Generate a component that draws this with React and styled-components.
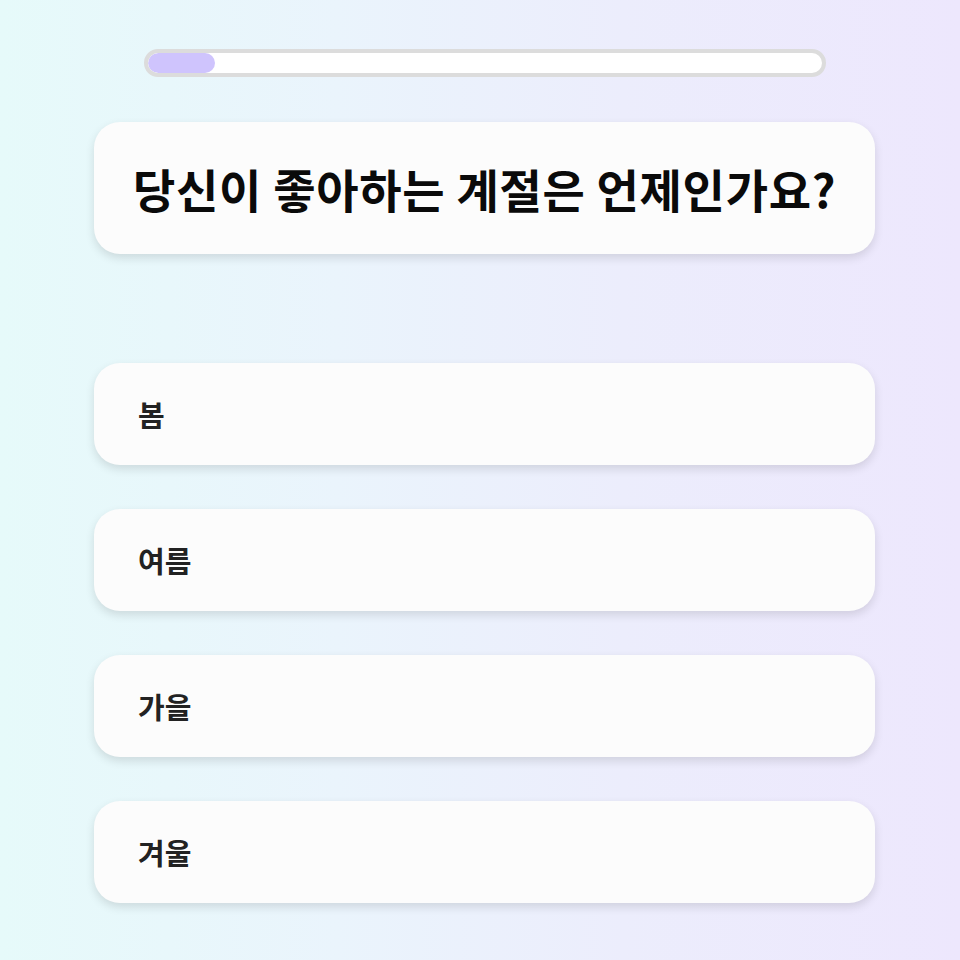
import React from 'react';
import styled, { createGlobalStyle } from 'styled-components';

const GlobalStyle = createGlobalStyle`
  html, body {
    margin: 0;
    padding: 0;
  }
  body {
    font-family: "Noto Sans CJK KR", "Noto Sans", sans-serif;
    background: linear-gradient(90deg, #e6fafa 0%, #eaf4fc 35%, #ecedfc 65%, #ede7fd 100%);
    min-height: 960px;
  }
`;

const Page = styled.div`
  min-height: 960px;
  box-sizing: border-box;
  padding: 49px 85px 0 94px;
`;

const Quiz = styled.div`
  display: flex;
  flex-direction: column;
  align-items: center;
`;

const ProgressTrack = styled.div`
  width: 682px;
  height: 28px;
  box-sizing: border-box;
  border: 4px solid #dcdcdc;
  border-radius: 14px;
  background: #ffffff;
  overflow: hidden;
`;

const ProgressFill = styled.div`
  height: 100%;
  background: #cfc4fd;
  border-radius: 10px;
`;

const QuestionCard = styled.div`
  width: 100%;
  height: 132px;
  margin-top: 45px;
  margin-bottom: 109px;
  display: flex;
  align-items: center;
  justify-content: center;
  background: #fcfcfc;
  border-radius: 26px;
  box-shadow: 0 4px 10px rgba(0, 0, 0, 0.12);
`;

const QuestionText = styled.h1`
  margin: 0;
  font-size: 46px;
  font-weight: 700;
  color: #0a0a0a;
  letter-spacing: 0.7px;
`;

const Options = styled.div`
  width: 100%;
  display: flex;
  flex-direction: column;
  gap: 44px;
`;

const OptionButton = styled.button`
  height: 102px;
  width: 100%;
  display: flex;
  align-items: center;
  padding: 0 44px;
  border: none;
  background: #fcfcfc;
  border-radius: 26px;
  box-shadow: 0 4px 10px rgba(0, 0, 0, 0.12);
  font-family: inherit;
  font-size: 29px;
  font-weight: 700;
  color: #222222;
  cursor: pointer;
`;

const options = ['봄', '여름', '가을', '겨울'];

const App = () => {
  const progress = 10;

  return (
    <Page>
      <GlobalStyle />
      <Quiz>
        <ProgressTrack>
          <ProgressFill style={{ width: `${progress}%` }} />
        </ProgressTrack>
        <QuestionCard>
          <QuestionText>당신이 좋아하는 계절은 언제인가요?</QuestionText>
        </QuestionCard>
        <Options>
          {options.map(option => (
            <OptionButton key={option}>{option}</OptionButton>
          ))}
        </Options>
      </Quiz>
    </Page>
  );
};

export default App;
